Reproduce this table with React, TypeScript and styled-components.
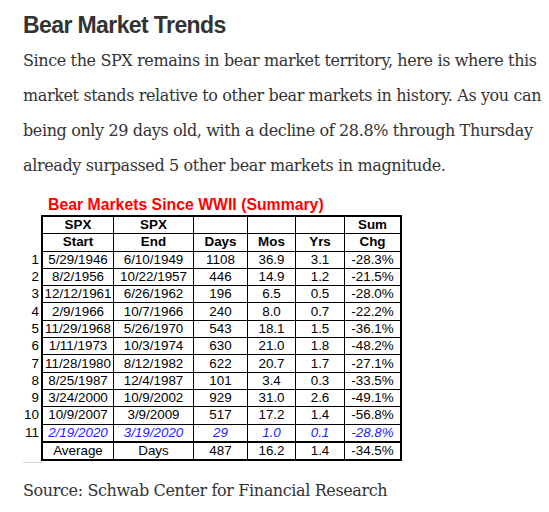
import React from 'react';
import styled, { createGlobalStyle } from 'styled-components';

const GlobalStyle = createGlobalStyle`
	html, body {
		margin: 0;
		padding: 0;
		background: #fff;
		overflow: hidden;
	}
`;

const Page = styled.div`
	width: 549px;
	height: 512px;
	overflow: hidden;
	padding: 11px 0 0 23px;
	box-sizing: border-box;
	color: #333;
`;

const Heading = styled.h2`
	margin: 0;
	font-family: 'Liberation Sans', Arial, sans-serif;
	font-weight: 700;
	font-size: 23px;
	line-height: 28px;
	letter-spacing: -0.6px;
	color: #333;
`;

const Body = styled.p`
	margin: 4px 0 0;
	font-family: 'DejaVu Serif', Georgia, serif;
	font-size: 16px;
	line-height: 35px;
	letter-spacing: -0.38px;
	color: #333;
`;

const Line = styled.span`
	display: block;
	white-space: nowrap;
`;

const Figure = styled.div`
	margin-top: 14px;
	font-family: 'Liberation Sans', Arial, sans-serif;
`;

const ChartTitle = styled.div`
	margin: 0 0 2px 25px;
	color: #ff0000;
	font-weight: 700;
	font-size: 15.8px;
	line-height: 16px;
`;

const Grid = styled.table`
	border-collapse: collapse;
	font-size: 13.4px;
	color: #000;
`;

const NumCell = styled.td`
	width: 16px;
	padding: 0 2px 0 0;
	text-align: right;
	border: none;
	height: 16.3px;
	line-height: 16px;
`;

const Cell = styled.td<{ $w?: number; $bold?: boolean; $blue?: boolean; $thickTop?: boolean; $edgeL?: boolean; $edgeR?: boolean; $edgeT?: boolean; $edgeB?: boolean }>`
	width: ${(p) => (p.$w ? `${p.$w}px` : 'auto')};
	padding: 0;
	text-align: center;
	line-height: 16px;
	height: 16.3px;
	border: 1px solid #000;
	border-left-width: ${(p) => (p.$edgeL ? 2 : 1)}px;
	border-right-width: ${(p) => (p.$edgeR ? 2 : 1)}px;
	border-top-width: ${(p) => (p.$edgeT || p.$thickTop ? 2 : 1)}px;
	border-bottom-width: ${(p) => (p.$edgeB ? 2 : 1)}px;
	font-weight: ${(p) => (p.$bold ? 700 : 400)};
	font-style: ${(p) => (p.$blue ? 'italic' : 'normal')};
	color: ${(p) => (p.$blue ? '#2222ff' : '#000')};
	white-space: nowrap;
`;

const Under = styled.div`
	width: 20px;
	border-top: 1px solid #d6d6d6;
	margin-top: 1px;
`;

const Source = styled.p`
	margin: 10px 0 0;
	font-family: 'DejaVu Serif', Georgia, serif;
	font-size: 16px;
	line-height: 35px;
	letter-spacing: -0.38px;
	color: #333;
`;

const widths = [70, 79, 53, 47, 48, 55];

const rows: string[][] = [
	['5/29/1946', '6/10/1949', '1108', '36.9', '3.1', '-28.3%'],
	['8/2/1956', '10/22/1957', '446', '14.9', '1.2', '-21.5%'],
	['12/12/1961', '6/26/1962', '196', '6.5', '0.5', '-28.0%'],
	['2/9/1966', '10/7/1966', '240', '8.0', '0.7', '-22.2%'],
	['11/29/1968', '5/26/1970', '543', '18.1', '1.5', '-36.1%'],
	['1/11/1973', '10/3/1974', '630', '21.0', '1.8', '-48.2%'],
	['11/28/1980', '8/12/1982', '622', '20.7', '1.7', '-27.1%'],
	['8/25/1987', '12/4/1987', '101', '3.4', '0.3', '-33.5%'],
	['3/24/2000', '10/9/2002', '929', '31.0', '2.6', '-49.1%'],
	['10/9/2007', '3/9/2009', '517', '17.2', '1.4', '-56.8%'],
	['2/19/2020', '3/19/2020', '29', '1.0', '0.1', '-28.8%'],
];

const average = ['Average', 'Days', '487', '16.2', '1.4', '-34.5%'];

const App: React.FC = () => {
	const renderCells = (vals: string[], opts: { bold?: boolean; blue?: boolean; top?: boolean; bottom?: boolean; thickTop?: boolean }) =>
		vals.map((v, i) => (
			<Cell
				key={i}
				$w={widths[i]}
				$bold={opts.bold}
				$blue={opts.blue}
				$thickTop={opts.thickTop}
				$edgeL={i === 0}
				$edgeR={i === vals.length - 1}
				$edgeT={opts.top}
				$edgeB={opts.bottom}
			>
				{v}
			</Cell>
		));

	return (
		<>
			<GlobalStyle />
			<Page>
				<Heading>Bear Market Trends</Heading>
				<Body>
					<Line>Since the SPX remains in bear market territory, here is where this</Line>
					<Line>market stands relative to other bear markets in history. As you can</Line>
					<Line>being only 29 days old, with a decline of 28.8% through Thursday</Line>
					<Line>already surpassed 5 other bear markets in magnitude.</Line>
				</Body>
				<Figure>
					<ChartTitle>Bear Markets Since WWII (Summary)</ChartTitle>
					<Grid>
						<tbody>
							<tr>
								<NumCell />
								{renderCells(['SPX', 'SPX', '', '', '', 'Sum'], { bold: true, top: true })}
							</tr>
							<tr>
								<NumCell />
								{renderCells(['Start', 'End', 'Days', 'Mos', 'Yrs', 'Chg'], { bold: true })}
							</tr>
							{rows.map((r, i) => (
								<tr key={i}>
									<NumCell>{i + 1}</NumCell>
									{renderCells(r, { blue: i === rows.length - 1 })}
								</tr>
							))}
							<tr>
								<NumCell />
								{renderCells(average, { bottom: true, thickTop: true })}
							</tr>
						</tbody>
					</Grid>
					<Under />
				</Figure>
				<Source>Source: Schwab Center for Financial Research</Source>
			</Page>
		</>
	);
};

export default App;
